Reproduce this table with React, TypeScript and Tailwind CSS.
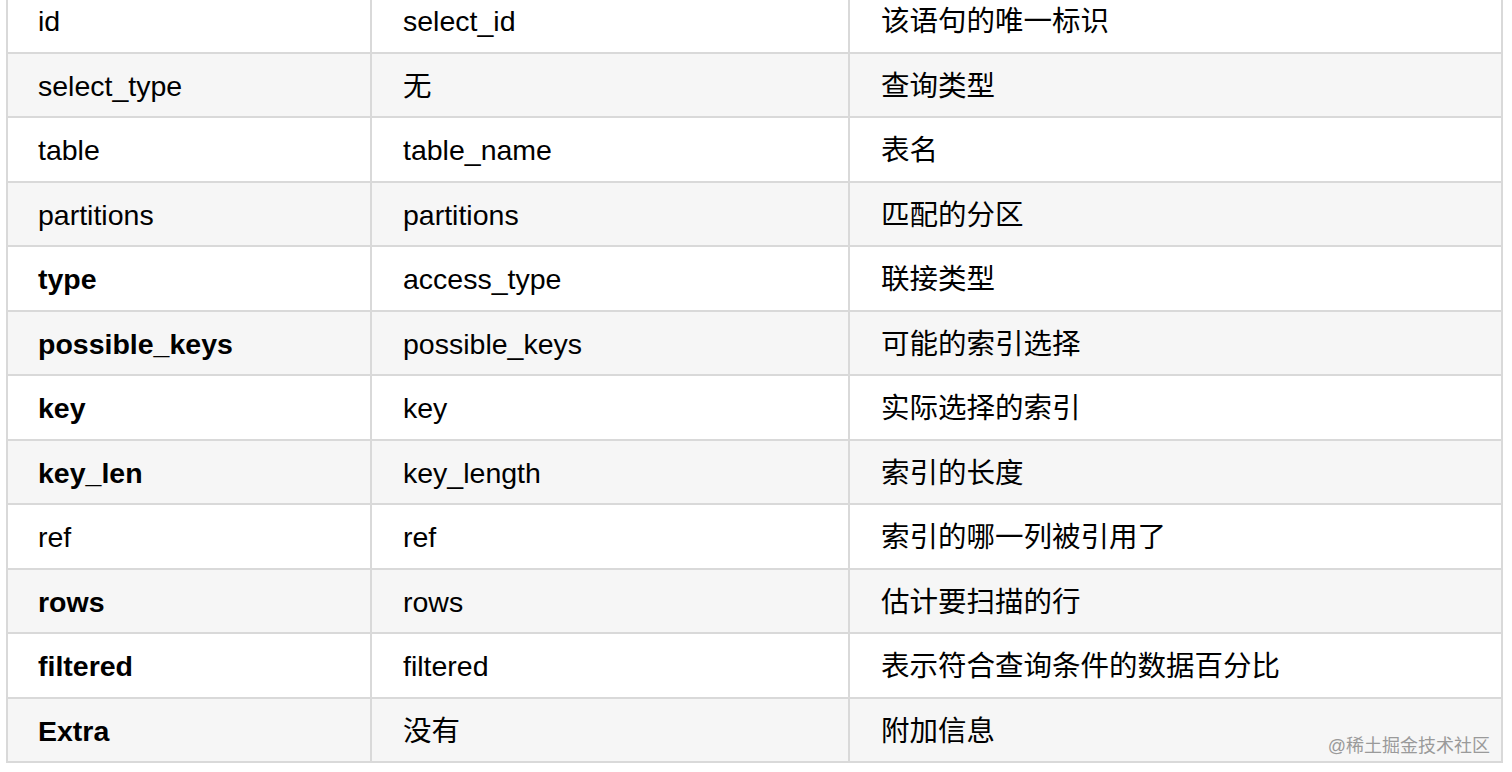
import React from "react";

type Row = { field: string; name: string; desc: string; bold?: boolean };

const rows: Row[] = [
    { field: "id", name: "select_id", desc: "该语句的唯一标识" },
    { field: "select_type", name: "无", desc: "查询类型" },
    { field: "table", name: "table_name", desc: "表名" },
    { field: "partitions", name: "partitions", desc: "匹配的分区" },
    { field: "type", name: "access_type", desc: "联接类型", bold: true },
    { field: "possible_keys", name: "possible_keys", desc: "可能的索引选择", bold: true },
    { field: "key", name: "key", desc: "实际选择的索引", bold: true },
    { field: "key_len", name: "key_length", desc: "索引的长度", bold: true },
    { field: "ref", name: "ref", desc: "索引的哪一列被引用了" },
    { field: "rows", name: "rows", desc: "估计要扫描的行", bold: true },
    { field: "filtered", name: "filtered", desc: "表示符合查询条件的数据百分比", bold: true },
    { field: "Extra", name: "没有", desc: "附加信息", bold: true },
];

const App = () => {
    return (
        <div
            className="w-[1512px] h-[772px] overflow-hidden bg-white text-black relative"
            style={{ fontFamily: '"Liberation Sans", Arial, "Noto Sans CJK SC", sans-serif' }}
        >
            <div className="ml-[6px] mt-[-11px] w-[1497px] border-x-2 border-[#d9d9d9]">
                {rows.map((r, i) => (
                    <div
                        key={r.field}
                        className={`grid grid-cols-[364px_478px_651px] h-[64.5px] border-b-2 border-[#d9d9d9] text-[28.5px] ${
                            i % 2 === 1 ? "bg-[#f6f6f6]" : "bg-white"
                        }`}
                    >
                        <div className={`flex items-center pl-[30px] pt-[3px] border-r-2 border-[#d9d9d9] ${r.bold ? "font-bold" : ""}`}>
                            {r.field}
                        </div>
                        <div className="flex items-center pl-[31px] pt-[3px] border-r-2 border-[#d9d9d9]">{r.name}</div>
                        <div className="flex items-center pl-[31px] pt-[3px]">{r.desc}</div>
                    </div>
                ))}
            </div>
            {/* watermark */}
            <div className="absolute right-[22px] top-[732px] text-[18px] leading-[28px] text-[#9a9a9a]">
                @稀土掘金技术社区
            </div>
        </div>
    );
};

export default App;
